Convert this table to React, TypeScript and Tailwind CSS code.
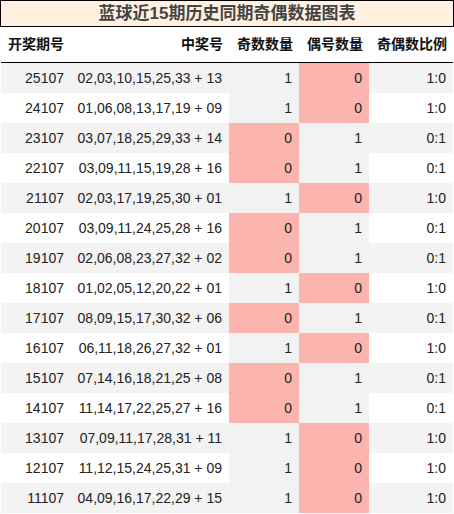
const rows: [string, string, number, number][] = [
  ["25107", "02,03,10,15,25,33 + 13", 1, 0],
  ["24107", "01,06,08,13,17,19 + 09", 1, 0],
  ["23107", "03,07,18,25,29,33 + 14", 0, 1],
  ["22107", "03,09,11,15,19,28 + 16", 0, 1],
  ["21107", "02,03,17,19,25,30 + 01", 1, 0],
  ["20107", "03,09,11,24,25,28 + 16", 0, 1],
  ["19107", "02,06,08,23,27,32 + 02", 0, 1],
  ["18107", "01,02,05,12,20,22 + 01", 1, 0],
  ["17107", "08,09,15,17,30,32 + 06", 0, 1],
  ["16107", "06,11,18,26,27,32 + 01", 1, 0],
  ["15107", "07,14,16,18,21,25 + 08", 0, 1],
  ["14107", "11,14,17,22,25,27 + 16", 0, 1],
  ["13107", "07,09,11,17,28,31 + 11", 1, 0],
  ["12107", "11,12,15,24,25,31 + 09", 1, 0],
  ["11107", "04,09,16,17,22,29 + 15", 1, 0],
];

const cjk = "font-['Liberation_Sans','Noto_Sans_CJK_SC',sans-serif]";

export default function App() {
  return (
    <div className={`w-[454px] h-[514px] bg-white overflow-hidden ${cjk}`}>
      <div className="h-[27px] border border-black bg-[#fff0e0] flex items-center justify-center text-[17px] font-bold text-[#444]">
        蓝球近15期历史同期奇偶数据图表
      </div>
      <div className="mx-[1px] h-[36px] flex items-center border-b border-black text-[14px] font-bold text-[#111]">
        <div className="w-[69px] pl-[7px]">开奖期号</div>
        <div className="w-[159px] text-right pr-[6px]">中奖号</div>
        <div className="w-[70px] text-right pr-[6px]">奇数数量</div>
        <div className="w-[70px] text-right pr-[6px]">偶号数量</div>
        <div className="flex-1 text-right pr-[6px]">奇偶数比例</div>
      </div>
      <div className="mx-[1px]">
        {rows.map(([issue, nums, odd, even], i) => (
          <div
            key={issue}
            className={`h-[30px] flex items-center text-[14px] text-[#222] ${i % 2 === 0 ? "bg-[#f3f3f3]" : "bg-white"}`}
          >
            <div className="w-[69px] text-right pr-[6px]">{issue}</div>
            <div className="w-[159px] text-right pr-[7px]">{nums}</div>
            <div className={`w-[70px] h-full flex items-center justify-end pr-[7px] ${odd === 0 ? "bg-[#fbb4ae]" : "bg-[#f2f2f2]"}`}>
              {odd}
            </div>
            <div className={`w-[70px] h-full flex items-center justify-end pr-[7px] ${even === 0 ? "bg-[#fbb4ae]" : "bg-[#f2f2f2]"}`}>
              {even}
            </div>
            <div className="flex-1 text-right pr-[7px]">{`${odd}:${even}`}</div>
          </div>
        ))}
      </div>
    </div>
  );
}
